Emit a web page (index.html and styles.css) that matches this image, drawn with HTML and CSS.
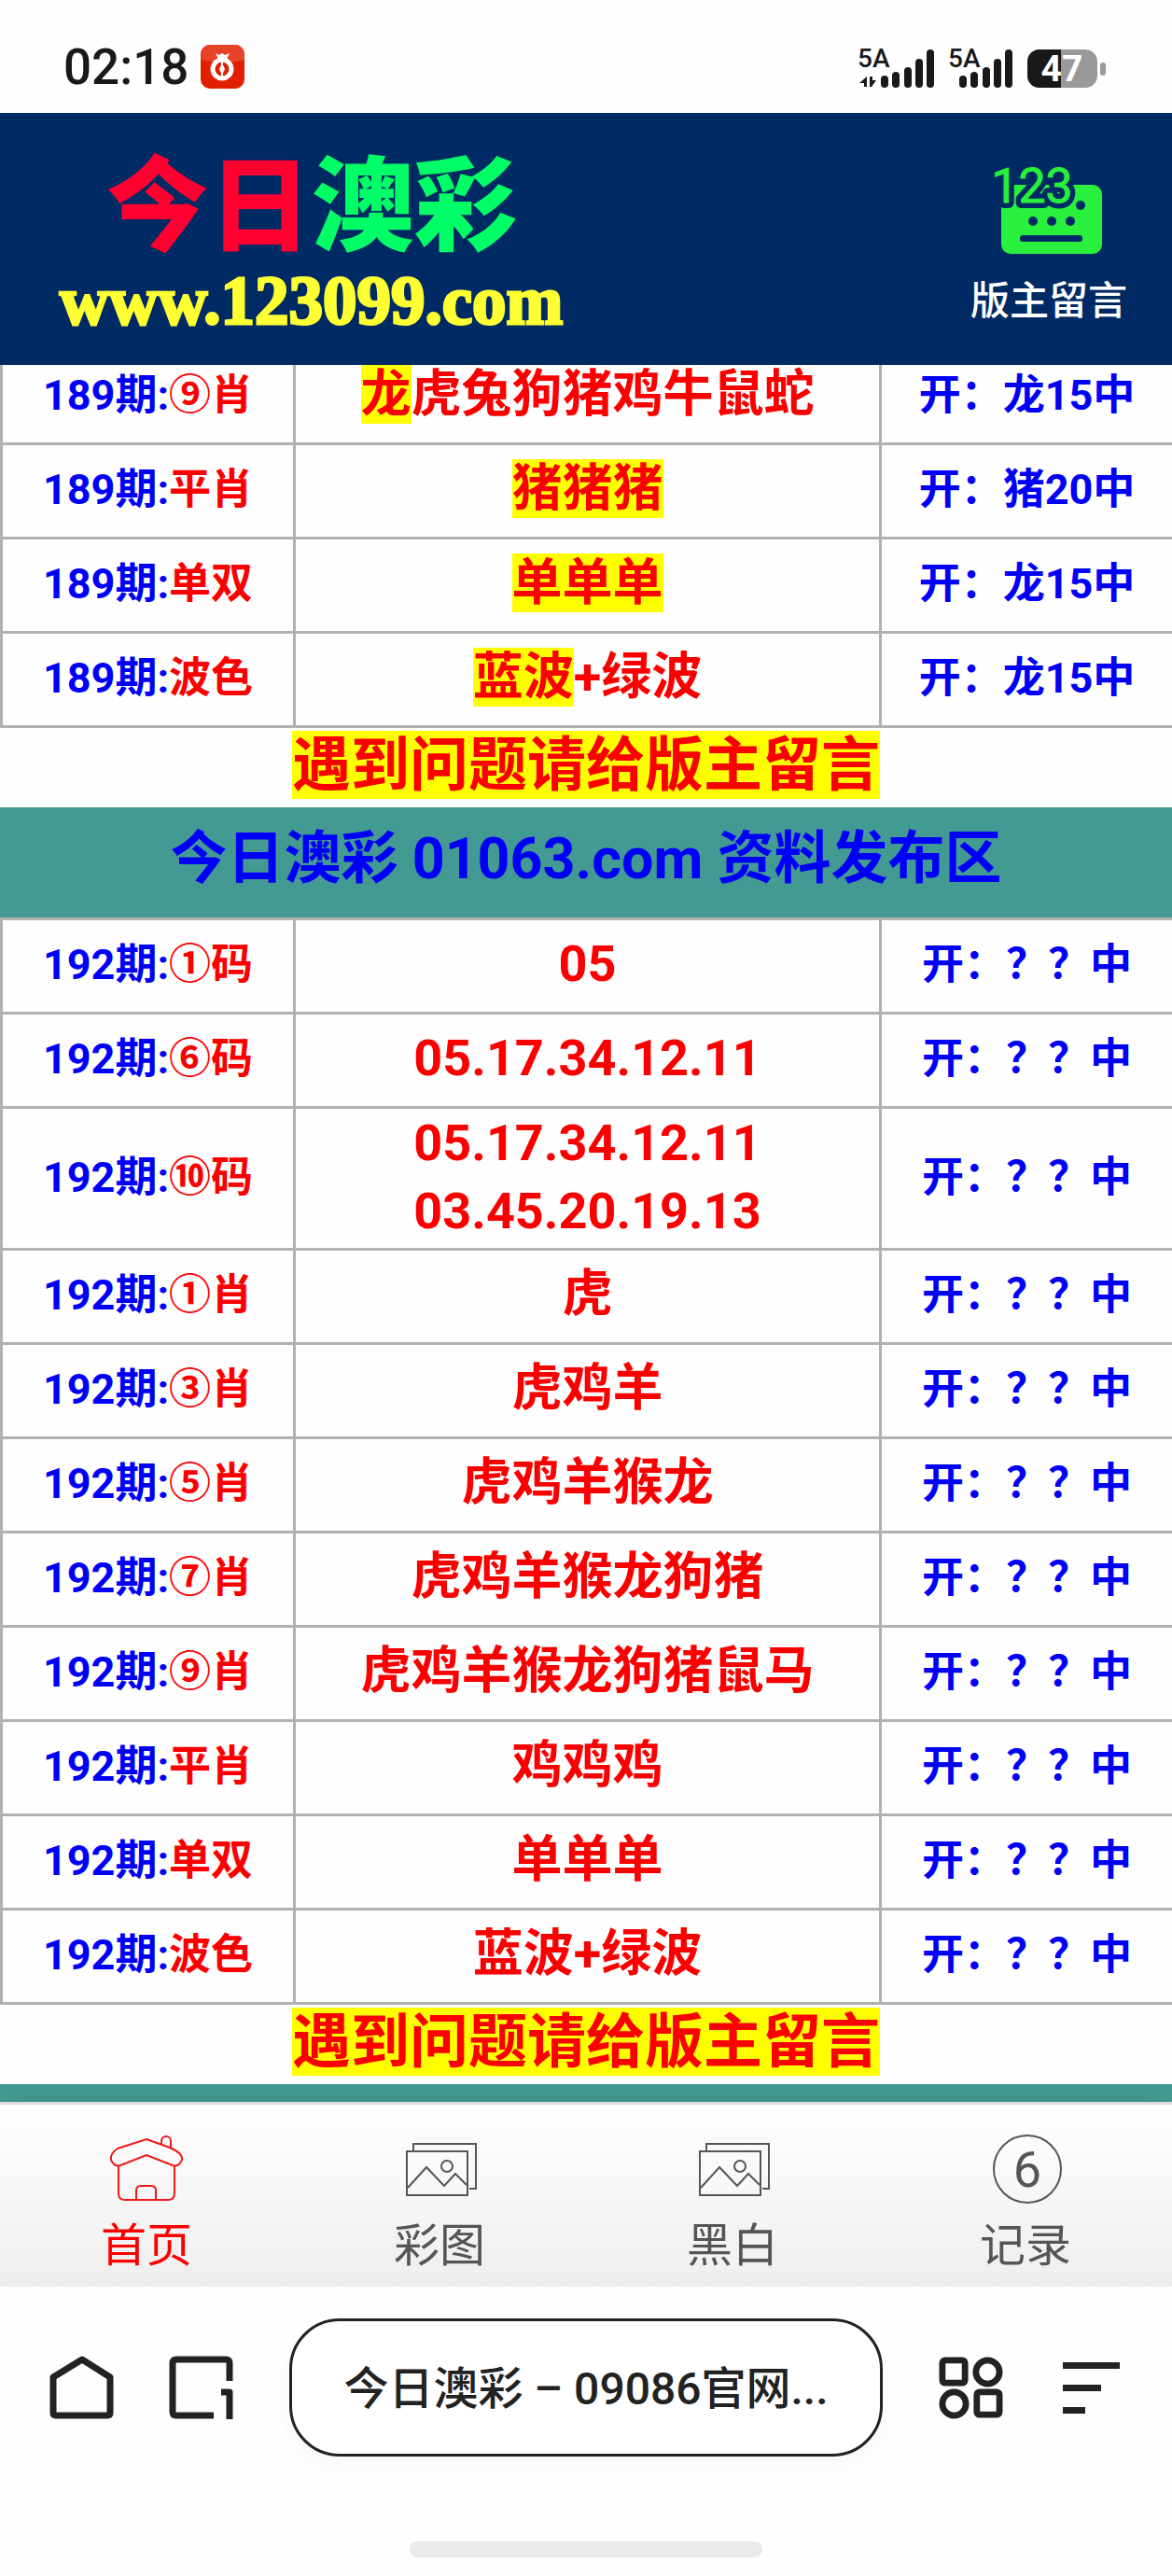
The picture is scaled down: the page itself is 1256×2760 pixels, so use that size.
FILE: index.html
```html
<!DOCTYPE html>
<html lang="zh-CN">
<head>
    <meta charset="UTF-8">
    <meta name="viewport" content="width=device-width, initial-scale=1.0">
    <title>今日澳彩</title>
    <link rel="stylesheet" href="styles.css">
</head>
<body>
    <!-- Status bar -->
    <div class="status-bar">
        <span class="clock">02:18</span>
        <svg class="app-badge" viewBox="0 0 47 47" width="47" height="47">
            <rect width="47" height="47" rx="10" fill="#e02000"/>
            <path d="M0 16V10A10 10 0 0 1 10 0H37A10 10 0 0 1 47 10V16Q23 22 0 16Z" fill="#e5442a"/>
            <path d="M16 9l4 2 3-2 3 2 5-2-3 6h-9z" fill="#fff"/>
            <circle cx="23" cy="26" r="10" fill="none" stroke="#fff" stroke-width="5"/>
            <path d="M23 18v16M21 26l2-4 2 4-2 4z" fill="#fff" stroke="#fff" stroke-width="2"/>
        </svg>
        <div class="status-right">
            <svg viewBox="0 0 84 60" width="84" height="60">
                <text class="net" x="0" y="30">5A</text>
                <path d="M10 40v11h-3v-4H2zM13 40h3v4h4l-5 7h-2z" fill="#191919"/>
                <g fill="#191919">
                    <rect x="25" y="39" width="8" height="13" rx="4"/>
                    <rect x="37" y="35" width="8" height="17" rx="4"/>
                    <rect x="50" y="30" width="8" height="22" rx="4"/>
                    <rect x="62" y="21" width="8" height="31" rx="4"/>
                    <rect x="74" y="11" width="8" height="41" rx="4"/>
                </g>
            </svg>
            <svg viewBox="0 0 72 60" width="72" height="60">
                <text class="net" x="0" y="30">5A</text>
                <g fill="#191919">
                    <rect x="12" y="39" width="8" height="13" rx="4"/>
                    <rect x="24" y="35" width="8" height="17" rx="4"/>
                    <rect x="37" y="30" width="8" height="22" rx="4"/>
                    <rect x="49" y="21" width="8" height="31" rx="4"/>
                    <rect x="61" y="11" width="8" height="41" rx="4"/>
                </g>
            </svg>
            <svg viewBox="0 0 85 60" width="85" height="60">
                <rect x="0" y="11" width="75" height="41" rx="13" fill="#999"/>
                <path d="M36 11H13A13 13 0 0 0 0 24V39A13 13 0 0 0 13 52H36Z" fill="#191919"/>
                <rect x="78" y="25" width="6" height="14" rx="3" fill="#999"/>
                <text class="level" x="37" y="45">47</text>
            </svg>
        </div>
    </div>

    <!-- Site header -->
    <header class="site-header">
        <a class="logo" href="#">
            <span class="logo-name"><span class="logo-red">今日</span><span class="logo-green">澳彩</span></span>
            <span class="logo-url">www.123099.com</span>
        </a>
        <a class="message-link" href="#">
            <svg viewBox="0 0 124 106" width="124" height="106">
                <rect x="11" y="31" width="108" height="74" rx="10" fill="#28f03c"/>
                <text class="digits digits-edge" x="44" y="50">123</text>
                <text class="digits" x="44" y="50">123</text>
                <g fill="#002a63">
                    <circle cx="96" cy="53" r="5"/>
                    <circle cx="45" cy="70" r="5"/>
                    <circle cx="65" cy="70" r="5"/>
                    <circle cx="85" cy="70" r="5"/>
                    <rect x="31" y="85" width="67" height="7" rx="3"/>
                </g>
            </svg>
            <span>版主留言</span>
        </a>
    </header>

    <main class="content">
        <table class="results">
            <tr><td>189期:<b>⑨肖</b></td><td><mark>龙</mark>虎兔狗猪鸡牛鼠蛇</td><td>开：龙15中</td></tr>
            <tr><td>189期:<b>平肖</b></td><td><mark>猪猪猪</mark></td><td>开：猪20中</td></tr>
            <tr><td>189期:<b>单双</b></td><td><mark>单单单</mark></td><td>开：龙15中</td></tr>
            <tr><td>189期:<b>波色</b></td><td><mark>蓝波</mark>+绿波</td><td>开：龙15中</td></tr>
        </table>
        <p class="notice"><mark>遇到问题请给版主留言</mark></p>

        <h2 class="section-title">今日澳彩 01063.com 资料发布区</h2>
        <table class="results ruled">
            <tr><td>192期:<b>①码</b></td><td>05</td><td>开：？？中</td></tr>
            <tr><td>192期:<b>⑥码</b></td><td>05.17.34.12.11</td><td>开：？？中</td></tr>
            <tr><td>192期:<b>⑩码</b></td><td class="two-lines">05.17.34.12.11<br>03.45.20.19.13</td><td>开：？？中</td></tr>
            <tr><td>192期:<b>①肖</b></td><td>虎</td><td>开：？？中</td></tr>
            <tr><td>192期:<b>③肖</b></td><td>虎鸡羊</td><td>开：？？中</td></tr>
            <tr><td>192期:<b>⑤肖</b></td><td>虎鸡羊猴龙</td><td>开：？？中</td></tr>
            <tr><td>192期:<b>⑦肖</b></td><td>虎鸡羊猴龙狗猪</td><td>开：？？中</td></tr>
            <tr><td>192期:<b>⑨肖</b></td><td>虎鸡羊猴龙狗猪鼠马</td><td>开：？？中</td></tr>
            <tr><td>192期:<b>平肖</b></td><td>鸡鸡鸡</td><td>开：？？中</td></tr>
            <tr><td>192期:<b>单双</b></td><td>单单单</td><td>开：？？中</td></tr>
            <tr><td>192期:<b>波色</b></td><td>蓝波+绿波</td><td>开：？？中</td></tr>
        </table>
        <p class="notice"><mark>遇到问题请给版主留言</mark></p>
        <div class="section-edge"></div>
    </main>

    <!-- Site tabs -->
    <nav class="tabs">
        <a class="tab active" href="#">
            <svg viewBox="0 0 80 76" width="80" height="76" fill="none" stroke="#f01818" stroke-width="2">
                <path d="M40 5L65 14Q79 20 78 27Q75 35 68 33L40 22L12 33Q5 35 2 27Q1 20 9 15Z"/>
                <path d="M56 10V7A5 5 0 0 1 66 7V14"/>
                <path d="M10 33V63Q10 70 17 70H63Q70 70 70 63V33"/>
                <path d="M29 70V60Q29 55 34 55H45Q50 55 50 60V70"/>
            </svg>
            <span>首页</span>
        </a>
        <a class="tab" href="#">
            <svg viewBox="0 0 80 76" width="80" height="76" fill="none" stroke="#555" stroke-width="2">
                <path d="M12 17V10H79V58H72M5 18H70V65H5ZM6 57L26 35L45 55L57 42L69 54"/>
                <circle cx="48" cy="34" r="6"/>
            </svg>
            <span>彩图</span>
        </a>
        <a class="tab" href="#">
            <svg viewBox="0 0 80 76" width="80" height="76" fill="none" stroke="#555" stroke-width="2">
                <path d="M12 17V10H79V58H72M5 18H70V65H5ZM6 57L26 35L45 55L57 42L69 54"/>
                <circle cx="48" cy="34" r="6"/>
            </svg>
            <span>黑白</span>
        </a>
        <a class="tab" href="#">
            <svg viewBox="0 0 80 76" width="80" height="76">
                <circle cx="42" cy="37" r="36" fill="none" stroke="#555" stroke-width="2"/>
                <text class="tab-number" x="42" y="56">6</text>
            </svg>
            <span>记录</span>
        </a>
    </nav>

    <!-- Browser toolbar -->
    <footer class="toolbar">
        <div class="toolbar-row">
            <button type="button" aria-label="主页">
                <svg viewBox="0 0 68 68" width="68" height="68" fill="none" stroke="#222" stroke-width="7" stroke-linejoin="round">
                    <path d="M34 4L64 23V61Q64 64 61 64H6Q3 64 3 61V23Z"/>
                </svg>
            </button>
            <button type="button" aria-label="标签页">
                <svg viewBox="0 0 68 68" width="68" height="68" fill="none" stroke="#222" stroke-width="7">
                    <path d="M47 64H7Q3 64 3 60V8Q3 4 7 4H60Q64 4 64 8V27"/>
                    <path d="M55 39H64V68" stroke-linejoin="round"/>
                </svg>
            </button>
            <button type="button" class="address">今日澳彩 – 09086官网...</button>
            <button type="button" aria-label="应用">
                <svg viewBox="0 0 70 68" width="68" height="68" fill="none" stroke="#222" stroke-width="7">
                    <rect x="4" y="4" width="25" height="25" rx="3"/>
                    <circle cx="54" cy="17" r="13"/>
                    <circle cx="17" cy="52" r="13"/>
                    <rect x="42" y="39" width="25" height="25" rx="3"/>
                </svg>
            </button>
            <button type="button" aria-label="菜单">
                <svg viewBox="0 0 68 68" width="68" height="68" fill="#222">
                    <path d="M5 7H66V14H5ZM5 31H46V38H5ZM5 55H29V62H5Z"/>
                </svg>
            </button>
        </div>
        <div class="home-indicator"></div>
    </footer>
</body>
</html>
```

FILE: styles.css
```css
* {
    box-sizing: border-box;
}
body {
    font-family: Roboto, "Noto Sans CJK SC", sans-serif;
    margin: 0;
    height: 100vh;
    display: flex;
    flex-direction: column;
    background: #fefefe;
    overflow: hidden;
}
a {
    color: inherit;
    text-decoration: none;
}
svg {
    display: block;
    overflow: visible;
}

/* status bar */
.status-bar {
    flex: none;
    display: flex;
    align-items: center;
    height: 121px;
    padding: 22px 70px 0 68px;
    color: #191919;
}
.clock {
    font-size: 53px;
    font-weight: 500;
    line-height: 60px;
}
.app-badge {
    margin-left: 13px;
}
.status-right {
    display: flex;
    gap: 13px;
    margin-left: auto;
}
.net {
    font-size: 28px;
    font-weight: 500;
    fill: #191919;
}
.level {
    font-size: 39px;
    font-weight: 700;
    fill: #fff;
    text-anchor: middle;
}

/* header */
.site-header {
    flex: none;
    position: relative;
    z-index: 1;
    display: flex;
    justify-content: space-between;
    height: 270px;
    padding: 42px 48px 0 64px;
    background: #002a63;
}
.logo {
    display: flex;
    flex-direction: column;
    align-items: center;
}
.logo-name {
    font-size: 110px;
    font-weight: 900;
    line-height: 120px;
}
.logo-red {
    color: #ff0030;
}
.logo-green {
    color: #00ff66;
}
.logo-url {
    font-family: "Liberation Serif", serif;
    font-size: 73px;
    font-weight: 700;
    line-height: 80px;
    color: #ffff33;
    -webkit-text-stroke: 3px #ffff33;
}
.message-link {
    display: flex;
    flex-direction: column;
    align-items: center;
    gap: 20px;
    padding-top: 4px;
    font-size: 42px;
    font-weight: 500;
    line-height: 60px;
    color: #fff;
}
.digits {
    font-size: 52px;
    font-weight: 400;
    fill: #28f03c;
    stroke: #28f03c;
    stroke-width: 1px;
    stroke-linejoin: round;
    text-anchor: middle;
}
.digits-edge {
    stroke: #002a63;
    stroke-width: 12px;
}

/* results */
.content {
    flex: 1;
    min-height: 0;
    margin-top: -15px;
    overflow: hidden;
    font-weight: 700;
}
.results {
    width: 100%;
    table-layout: fixed;
    border-collapse: separate;
    border-spacing: 0;
    text-align: center;
}
.ruled {
    border-top: 3px solid #b1b1b1;
}
.results td {
    width: 25%;
    height: 101px;
    padding: 0 0 2px;
    border-left: 3px solid #b1b1b1;
    border-bottom: 3px solid #b1b1b1;
    font-size: 45px;
    line-height: 60px;
    color: #0000f8;
}
.results td:nth-child(2) {
    width: 50%;
    padding-bottom: 4px;
    font-size: 54px;
    line-height: 74px;
    color: #fa0000;
}
.results td.two-lines:nth-child(2) {
    padding-bottom: 3px;
    line-height: 73px;
}
.results b {
    font-weight: 700;
    color: #fa0000;
}
mark {
    color: inherit;
    background: #ffff00;
}
.notice {
    margin: 0;
    padding-bottom: 6px;
    font-size: 63px;
    line-height: 79px;
    text-align: center;
    color: #fa0000;
}
.section-title {
    margin: 0;
    padding-bottom: 8px;
    font-size: 61px;
    line-height: 110px;
    text-align: center;
    color: #0000f8;
    background: #439a93;
}
.section-edge {
    height: 118px;
    background: #439a93;
}

/* site tabs */
.tabs {
    flex: none;
    position: relative;
    display: flex;
    height: 198px;
    padding-top: 32px;
    border-top: 3px solid #ddd;
    background: linear-gradient(#fff, #eee);
    box-shadow: 0 0 30px rgba(0, 0, 0, 0.08);
}
.tab {
    flex: 1;
    display: flex;
    flex-direction: column;
    align-items: center;
    gap: 14px;
    font-size: 49px;
    line-height: 60px;
    color: #555;
}
.tab.active {
    color: #fa0000;
}
.tab-number {
    font-size: 54px;
    font-weight: 400;
    fill: #555;
    text-anchor: middle;
}

/* browser toolbar */
.toolbar {
    flex: none;
    position: relative;
    display: flex;
    flex-direction: column;
    justify-content: space-between;
    align-items: center;
    height: 310px;
    padding: 34px 54px 20px;
    background: #fefefe;
}
.toolbar-row {
    display: flex;
    align-items: center;
    gap: 60px;
    width: 100%;
}
.toolbar button {
    flex: none;
    padding: 0;
    border: none;
    background: none;
    cursor: pointer;
}
.toolbar .address {
    flex: 1;
    height: 148px;
    padding-bottom: 6px;
    border: 3px solid #222;
    border-radius: 54px;
    background: #fff;
    box-shadow: 0 8px 16px rgba(60, 80, 160, 0.04);
    font-family: inherit;
    font-size: 48px;
    font-weight: 500;
    color: #222;
    white-space: nowrap;
}
.home-indicator {
    width: 378px;
    height: 17px;
    border-radius: 8px;
    background: #eaeaea;
}
```
